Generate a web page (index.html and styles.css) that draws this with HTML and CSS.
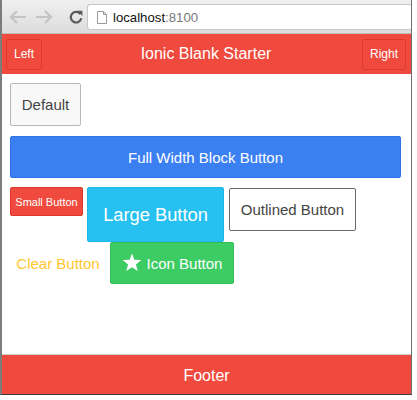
FILE: index.html
```html
<!DOCTYPE html>
<html>
<head>
<meta charset="utf-8">
<link rel="stylesheet" href="styles.css">
</head>
<body>
<div class="window">
  <div class="chrome">
    <div class="nav">
      <svg class="nav-icon" width="18" height="14" viewBox="0 0 18 14"><path d="M8 1 L2 7 L8 13 M2 7 H17" fill="none" stroke="#c4c4c4" stroke-width="2.2"/></svg>
      <svg class="nav-icon" width="18" height="14" viewBox="0 0 18 14"><path d="M10 1 L16 7 L10 13 M16 7 H1" fill="none" stroke="#c4c4c4" stroke-width="2.2"/></svg>
      <svg class="nav-icon reload" width="14" height="14" viewBox="0 0 14 14"><path d="M11.5 4.2 A5.3 5.3 0 1 0 12.3 8.2" fill="none" stroke="#5a5a5a" stroke-width="2.2"/><path d="M8.3 0.8 L13.4 0.8 L13.4 6 Z" fill="#5a5a5a"/></svg>
    </div>
    <div class="url">
      <svg class="page-icon" width="10" height="13" viewBox="0 0 10 13"><path d="M0.5 0.5 H6.5 L9.5 3.5 V12.5 H0.5 Z M6.5 0.5 V3.5 H9.5" fill="#fff" stroke="#9a9a9a" stroke-width="1"/></svg>
      <span class="host">localhost</span><span class="port">:8100</span>
    </div>
  </div>
  <div class="app">
    <header class="bar bar-header">
      <div class="bar-left"><button class="bar-btn">Left</button></div>
      <h1 class="title">Ionic Blank Starter</h1>
      <div class="bar-right"><button class="bar-btn">Right</button></div>
    </header>
    <main class="content">
      <div class="row-default"><button class="button btn-default">Default</button></div>
      <button class="button btn-block">Full Width Block Button</button>
      <div class="button-wrap">
        <button class="button btn-small">Small Button</button>
        <button class="button btn-large">Large Button</button>
        <button class="button btn-outline">Outlined Button</button>
        <button class="button btn-clear">Clear Button</button>
        <button class="button btn-icon"><svg class="star" width="20" height="19" viewBox="0 0 24 23"><path d="M12 0.5 L14.9 8.3 L23.3 8.6 L16.7 13.8 L19 21.9 L12 17.2 L5 21.9 L7.3 13.8 L0.7 8.6 L9.1 8.3 Z" fill="#fff"/></svg>Icon Button</button>
      </div>
    </main>
    <footer class="bar bar-footer">
      <h2 class="title">Footer</h2>
    </footer>
  </div>
</div>
</body>
</html>
```

FILE: styles.css
```css
* { box-sizing: border-box; }
html, body { margin: 0; padding: 0; background: #fff; }
body { font-family: "Liberation Sans", Arial, sans-serif; }

.window {
  width: 412px;
  height: 395px;
  display: flex;
  flex-direction: column;
  border-left: 2px solid #7c7c7c;
  border-right: 1px solid #6e6e6e;
  border-bottom: 1px solid #3a3a3a;
}

.chrome {
  height: 34px;
  flex: none;
  display: flex;
  align-items: center;
  background: linear-gradient(#f0f0f0, #dcdcdc);
  border-bottom: 1px solid #bdbdbd;
  padding-left: 7px;
}
.nav { display: flex; align-items: center; gap: 8px; width: 78px; }
.nav-icon.reload { margin-left: 8px; }
.url {
  flex: 1;
  height: 26px;
  margin-top: 1px;
  background: #fff;
  border: 1px solid #c8c8c8;
  border-right: none;
  border-radius: 3px 0 0 3px;
  display: flex;
  align-items: center;
  padding-left: 9px;
  font-size: 13.2px;
}
.page-icon { margin-right: 6px; }
.host { color: #111; }
.port { color: #777; }

.app { flex: 1; display: flex; flex-direction: column; min-height: 0; }

.bar {
  background: #ef4a3d;
  color: #fff;
  flex: none;
}
.bar-header {
  height: 40px;
  display: grid;
  grid-template-columns: 1fr auto 1fr;
  align-items: center;
  padding: 0 5px 0 4px;
}
.bar-right { justify-self: end; }
.title {
  margin: 0;
  font-size: 16px;
  font-weight: normal;
  text-align: center;
  white-space: nowrap;
}
.bar-btn {
  height: 31px;
  padding: 0 7px;
  background: #ef4a3d;
  border: 1px solid #dc3a2e;
  border-radius: 2px;
  color: #fff;
  font-family: inherit;
  font-size: 12px;
}

.content {
  flex: 1;
  padding: 9px 10px 0 8px;
}

.button {
  font-family: inherit;
  font-size: 15px;
  white-space: nowrap;
  border: 1px solid transparent;
  border-radius: 2px;
  display: inline-flex;
  align-items: center;
  justify-content: center;
  padding: 0 12px;
  margin: 0;
  cursor: pointer;
}

.row-default { display: flex; }
.btn-default {
  height: 43px;
  width: 71px;
  background: #f8f8f8;
  border-color: #b8b8b8;
  color: #444;
}
.btn-block {
  display: flex;
  width: 100%;
  height: 42px;
  margin-top: 10px;
  background: #3b80f2;
  border-color: #2f74e6;
  color: #fff;
}
.button-wrap {
  display: flex;
  flex-wrap: wrap;
  align-items: flex-start;
  column-gap: 4px;
  margin-top: 9px;
  width: 350px;
}
.btn-small {
  height: 29px;
  width: 73px;
  padding: 0 4px;
  font-size: 11px;
  background: #ef4a3d;
  border-color: #e0372b;
  color: #fff;
}
.btn-large {
  height: 55px;
  width: 137px;
  padding: 0 14px;
  font-size: 18.3px;
  background: #26c1f1;
  border-color: #1eb6e6;
  color: #fff;
}
.btn-outline {
  height: 43px;
  width: 127px;
  margin-top: 1px;
  margin-left: 1px;
  background: #fff;
  border-color: #6a6a6a;
  color: #444;
}
.btn-clear {
  height: 42px;
  width: 96px;
  padding: 0 6px;
  background: transparent;
  color: #ffc72e;
}
.btn-icon {
  height: 42px;
  width: 124px;
  padding: 0 10px;
  background: #3dcb64;
  border-color: #33bf59;
  color: #fff;
  gap: 5px;
}
.star { flex: none; margin-top: -2px; }

.bar-footer {
  height: 40px;
  border-top: 1px solid #d0d0d0;
  display: flex;
  align-items: center;
  justify-content: center;
  padding-top: 3px;
}
```
